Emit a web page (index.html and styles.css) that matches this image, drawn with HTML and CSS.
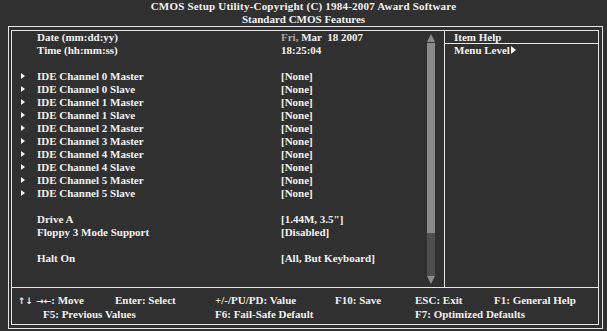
FILE: index.html
```
<!DOCTYPE html>
<html lang="en">
<head>
  <meta charset="UTF-8" />
  <title>Standard CMOS Features</title>
  <link rel="stylesheet" href="styles.css">
</head>
<body>
  <div class="title">
    <div class="title-main">CMOS Setup Utility-Copyright (C) 1984-2007 Award Software</div>
    <div>Standard CMOS Features</div>
  </div>
  <div class="frame">
    <div class="inner">
      <div class="main">
        <div class="settings">
          <div class="list">
            <div class="row"><span></span><span>Date (mm:dd:yy)</span><span class="val"><span class="dim">Fri,</span> Mar  18 2007</span></div>
            <div class="row"><span></span><span>Time (hh:mm:ss)</span><span class="val">18:25:04</span></div>
            <div class="row"></div>
            <div class="row"><span class="mark"></span><span>IDE Channel 0 Master</span><span class="val">[None]</span></div>
            <div class="row"><span class="mark"></span><span>IDE Channel 0 Slave</span><span class="val">[None]</span></div>
            <div class="row"><span class="mark"></span><span>IDE Channel 1 Master</span><span class="val">[None]</span></div>
            <div class="row"><span class="mark"></span><span>IDE Channel 1 Slave</span><span class="val">[None]</span></div>
            <div class="row"><span class="mark"></span><span>IDE Channel 2 Master</span><span class="val">[None]</span></div>
            <div class="row"><span class="mark"></span><span>IDE Channel 3 Master</span><span class="val">[None]</span></div>
            <div class="row"><span class="mark"></span><span>IDE Channel 4 Master</span><span class="val">[None]</span></div>
            <div class="row"><span class="mark"></span><span>IDE Channel 4 Slave</span><span class="val">[None]</span></div>
            <div class="row"><span class="mark"></span><span>IDE Channel 5 Master</span><span class="val">[None]</span></div>
            <div class="row"><span class="mark"></span><span>IDE Channel 5 Slave</span><span class="val">[None]</span></div>
            <div class="row"></div>
            <div class="row"><span></span><span>Drive A</span><span class="val">[1.44M, 3.5"]</span></div>
            <div class="row"><span></span><span>Floppy 3 Mode Support</span><span class="val">[Disabled]</span></div>
            <div class="row"></div>
            <div class="row"><span></span><span>Halt On</span><span class="val">[All, But Keyboard]</span></div>
          </div>
          <div class="scrollbar">
            <svg class="arrow" width="10" height="10" viewBox="0 0 10 10"><polygon points="5,2 9,10 1,10" fill="#8c8c8c"/></svg>
            <div class="thumb"></div>
            <div class="track"></div>
            <svg class="arrow" width="10" height="9" viewBox="0 0 10 9"><polygon points="1,0 9,0 5,8" fill="#8c8c8c"/></svg>
          </div>
        </div>
        <div class="help">
          <div class="help-head">Item Help</div>
          <div class="help-body">Menu Level<span class="mark small"></span></div>
        </div>
      </div>
      <div class="keys">
        <span><span class="arrows">&uarr;&darr; &rarr;&larr;</span>: Move</span>
        <span>Enter: Select</span>
        <span>+/-/PU/PD: Value</span>
        <span>F10: Save</span>
        <span>ESC: Exit</span>
        <span>F1: General Help</span>
        <span class="k-f5">F5: Previous Values</span>
        <span class="k-f6">F6: Fail-Safe Default</span>
        <span class="k-f7">F7: Optimized Defaults</span>
      </div>
    </div>
  </div>
</body>
</html>
```
FILE: styles.css
```
html, body {
  margin: 0;
  background: #303030;
  color: #f2f2f2;
  font-family: "Liberation Serif", "Times New Roman", serif;
  font-weight: bold;
  font-size: 11px;
  line-height: 13px;
}
.title {
  text-align: center;
  height: 26px;
}
.title-main {
  letter-spacing: 0.2px;
}
.frame {
  margin-left: 8px;
  width: 588px;
  border: 1px solid #e6e6e6;
  padding: 3px 3px 3px 2px;
}
.inner {
  border: 1px solid #e6e6e6;
}
.main {
  display: flex;
  height: 256px;
  border-bottom: 1px solid #e6e6e6;
}
.settings {
  width: 432px;
  display: flex;
  border-right: 1px solid #e6e6e6;
}
.list {
  flex: 1;
}
.row {
  display: grid;
  grid-template-columns: 25px 244px 1fr;
  height: 13px;
  white-space: pre;
}
.mark {
  display: block;
  width: 0;
  height: 0;
  margin: 3px 0 0 9px;
  border-top: 3.5px solid transparent;
  border-bottom: 3.5px solid transparent;
  border-left: 4px solid #f2f2f2;
}
.mark.small {
  display: inline-block;
  margin: 0 0 0 1px;
  border-top-width: 4px;
  border-bottom-width: 4px;
  border-left-width: 5px;
}
.dim {
  color: #a8a8a8;
}
.scrollbar {
  width: 10px;
  margin-right: 8px;
  display: flex;
  flex-direction: column;
  padding: 1px 0 2px;
}
.arrow {
  display: block;
}
.thumb {
  height: 190px;
  margin: 1px 1px 0;
  background: #8a8a8a;
}
.track {
  flex: 1;
  margin: 0 1px;
  background: #4e4e4e;
}
.help {
  flex: 1;
}
.help-head {
  height: 12px;
  padding-left: 9px;
  border-bottom: 1px solid #e6e6e6;
}
.help-body {
  padding-left: 9px;
}
.keys {
  display: grid;
  grid-template-columns: 97px 100px 120px 80px 79px 1fr;
  padding: 6px 0 3px 6px;
  white-space: nowrap;
}
.arrows {
  font-family: "DejaVu Sans", sans-serif;
  font-size: 9px;
}
.k-f5 {
  grid-column: 1 / span 2;
  padding-left: 25px;
}
.k-f6 {
  grid-column: 3 / span 2;
}
.k-f7 {
  grid-column: 5 / span 2;
}
```
